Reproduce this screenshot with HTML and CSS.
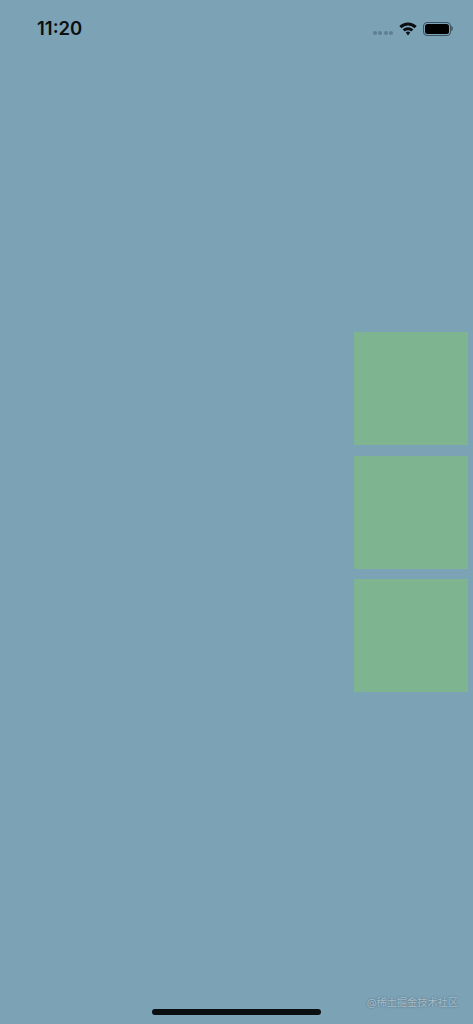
FILE: index.html
```html
<!DOCTYPE html>
<html lang="en">
  <head>
    <meta charset="UTF-8" />
    <meta name="viewport" content="width=device-width, initial-scale=1.0" />
    <title>boxes</title>
    <link rel="stylesheet" href="styles.css">
  </head>
  <body>
    <div class="page">
      <div class="status-bar">
        <span class="time">11:20</span>
        <div class="status-icons">
          <div class="signal">
            <span class="dot"></span>
            <span class="dot"></span>
            <span class="dot"></span>
            <span class="dot"></span>
          </div>
          <svg class="wifi" width="18" height="15" viewBox="0 0 18 15">
            <path d="M0.3 5 A12.3 12.3 0 0 1 17.7 5 L15.5 7.3 A9 9 0 0 0 2.5 7.3 Z" fill="#0b0f12" />
            <path d="M3.7 8.4 A7.5 7.5 0 0 1 14.3 8.4 L12.2 10.6 A4.4 4.4 0 0 0 5.8 10.6 Z" fill="#0b0f12" />
            <path d="M6.8 11.5 A3.1 3.1 0 0 1 11.2 11.5 L9 14.6 Z" fill="#0b0f12" />
          </svg>
          <div class="battery">
            <div class="battery-body"><div class="battery-level"></div></div>
            <div class="battery-cap"></div>
          </div>
        </div>
      </div>
      <div class="boxes">
        <div class="box"></div>
        <div class="box"></div>
        <div class="box"></div>
      </div>
      <div class="bottom">
        <div class="home-bar"></div>
        <span class="watermark">@稀土掘金技术社区</span>
      </div>
    </div>
  </body>
</html>
```

FILE: styles.css
```css
:root {
  --bg: #7ca2b6;
  --box: #7fb491;
  --dark: #0b0f12;
}

body {
  margin: 0;
  background-color: var(--bg);
  font-family: "Inter", "Liberation Sans", "Noto Sans CJK SC", sans-serif;
}

.page {
  display: grid;
  grid-template-rows: 1fr auto 1fr;
  height: 100vh;
  overflow: hidden;
}

.status-bar {
  display: flex;
  justify-content: space-between;
  align-items: flex-start;
  padding: 18px 20px 0 37px;
}

.time {
  font-size: 18.5px;
  font-weight: 600;
  line-height: 21px;
  color: var(--dark);
}

.status-icons {
  display: flex;
  align-items: center;
  height: 21px;
}

.signal {
  display: flex;
  gap: 1.5px;
  margin-top: 8px;
  margin-right: 6px;
}

.dot {
  width: 4px;
  height: 4px;
  border-radius: 50%;
  background-color: #5f7f92;
}

.wifi {
  margin-right: 6px;
}

.battery {
  display: flex;
  align-items: center;
}

.battery-body {
  box-sizing: border-box;
  width: 28px;
  height: 14px;
  padding: 1px;
  border: 1px solid #3c5260;
  border-radius: 4px;
}

.battery-level {
  height: 100%;
  border-radius: 2.5px;
  background-color: #000;
}

.battery-cap {
  width: 2px;
  height: 5px;
  border-radius: 0 2px 2px 0;
  background-color: #4a6474;
}

.boxes {
  display: flex;
  flex-direction: column;
  align-items: flex-end;
  gap: 10.5px;
  padding-right: 5px;
}

.box {
  width: 114px;
  height: 113px;
  background-color: var(--box);
}

.bottom {
  position: relative;
  display: flex;
  justify-content: center;
  align-items: flex-end;
  padding-bottom: 9px;
}

.home-bar {
  width: 169px;
  height: 6px;
  border-radius: 3px;
  background-color: var(--dark);
}

.watermark {
  position: absolute;
  right: 15px;
  bottom: 14px;
  font-size: 10.2px;
  line-height: 16px;
  color: #aabdc9;
  text-shadow: 0 0 2px #436477;
}
```
